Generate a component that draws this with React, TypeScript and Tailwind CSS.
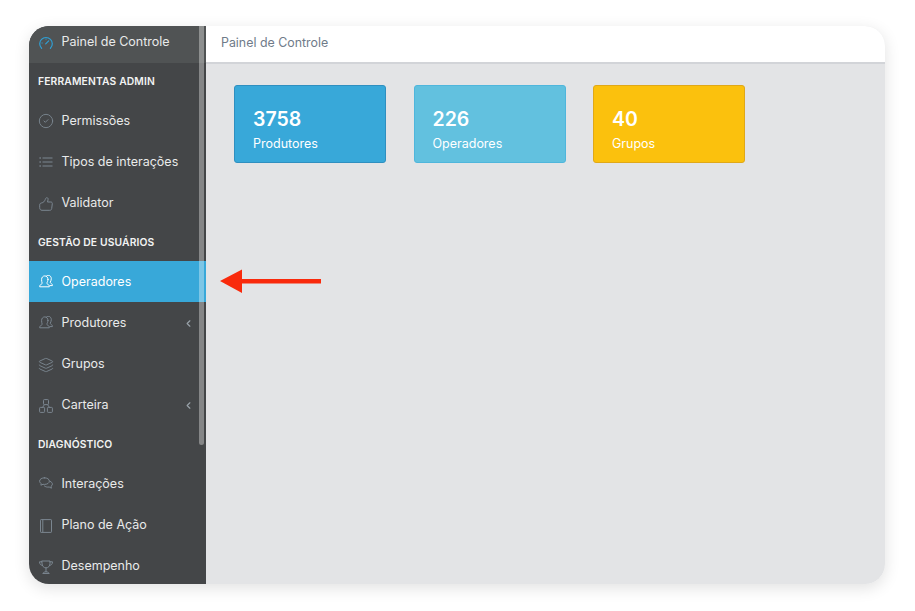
import React from 'react';
import { ChevronLeft, CircleCheck, Layers } from 'lucide-react';

type IconProps = { className?: string };

const GaugeIcon = ({ className }: IconProps) => (
  <svg viewBox="0 0 14 14" fill="none" stroke="currentColor" strokeWidth="1.200" strokeLinecap="round" className={className}>
    <path d="M2.600 12.300 A6.300 6.300 0 1 1 11.400 12.300" />
    <path d="M6.700 7.800 L9.700 4.800" />
    <path d="M7 2.900 V3.300 M2.900 7 H3.300" strokeWidth="0.900" />
  </svg>
);

const ThumbIcon = ({ className }: IconProps) => (
  <svg viewBox="0 0 14 14" fill="none" stroke="currentColor" strokeWidth="1" strokeLinejoin="round" strokeLinecap="round" className={className}>
    <path d="M0.700 7.800 C0.700 6.500 1.700 6 2.700 5.900 C4.300 5.700 5.600 4.300 6.200 2.600 C6.600 1.400 7 .7 7.900 .7 C8.900 .7 9.300 1.700 9 2.900 L8.500 5 H11.800 C12.900 5 13.400 5.800 13.300 6.700 L12.700 11.500 C12.600 12.600 11.900 13.300 10.800 13.300 H3 C1.500 13.300 .7 12.300 .7 11 Z" />
  </svg>
);

const UserIcon = ({ className }: IconProps) => (
  <svg viewBox="0 0 14 14" fill="none" stroke="currentColor" strokeWidth="1" strokeLinejoin="round" strokeLinecap="round" className={className}>
    <path d="M9 4.400 C9 6 8.200 7.100 7.900 7.900 C7.700 8.500 8.200 9 9 9.400 C9.800 9.800 10.300 10.400 10.300 11.800 H.7 C.7 10.400 1.200 9.800 2 9.400 C2.800 9 3.300 8.500 3.100 7.900 C2.800 7.100 2.600 6 2.600 4.400 C2.600 2.500 3.900 .9 5.800 .9 C7.700 .9 9 2.500 9 4.400 Z" />
    <path d="M7.500 .9 C7.900 .5 8.500 .3 9.200 .3 C11.100 .3 12.300 1.800 12.300 3.700 C12.300 5.200 11.600 6.400 11.300 7.100 C11.100 7.700 11.600 8.100 12.300 8.500 C13 8.900 13.400 9.400 13.400 10.600 H11" />
  </svg>
);

const BoxesIcon = ({ className }: IconProps) => (
  <svg viewBox="0 0 14 14" fill="none" stroke="currentColor" strokeWidth="1" strokeLinejoin="round" className={className}>
    <rect x="4.500" y=".6" width="5" height="5" rx=".8" />
    <rect x=".6" y="8.400" width="5" height="5" rx=".8" />
    <rect x="8.400" y="8.400" width="5" height="5" rx=".8" />
    <path d="M5.500 5.600 L3.500 8.400 M8.500 5.600 L10.500 8.400" />
  </svg>
);

const ChatIcon = ({ className }: IconProps) => (
  <svg viewBox="0 0 14 14" fill="none" stroke="currentColor" strokeWidth="1" strokeLinejoin="round" strokeLinecap="round" className={className}>
    <path d="M5.500 .8 C2.800 .8 .6 2.200 .6 4.100 C.6 5.100 1.200 6 2.200 6.500 L1.900 8.200 L4 7.300 C4.500 7.400 5 7.400 5.500 7.400 C8.200 7.400 10.400 6 10.400 4.100 C10.400 2.200 8.200 .8 5.500 .8 Z" />
    <path d="M11.300 4.400 C12.600 5 13.400 6 13.400 7.100 C13.400 8 12.900 8.800 12 9.300 L12.400 11.200 L10.200 10 C9.800 10.100 9.300 10.100 8.800 10.100 C7.400 10.100 6.200 9.700 5.400 9" />
  </svg>
);

const NotebookIcon = ({ className }: IconProps) => (
  <svg viewBox="0 0 14 14" fill="none" stroke="currentColor" strokeWidth="1" strokeLinejoin="round" className={className}>
    <rect x="1.500" y=".6" width="11" height="12.800" rx=".6" />
    <path d="M3.800 .6 V13.400" />
  </svg>
);

const TrophyIcon = ({ className }: IconProps) => (
  <svg viewBox="0 0 14 14" fill="none" stroke="currentColor" strokeWidth="1" strokeLinejoin="round" strokeLinecap="round" className={className}>
    <path d="M3 1 H11 V3.500 C11 6 9.300 7.900 7 7.900 C4.700 7.900 3 6 3 3.500 Z" />
    <path d="M3 1.800 H.5 C.5 4 1.700 5.300 3.500 5.500 M11 1.800 H13.500 C13.500 4 12.300 5.300 10.500 5.500" />
    <path d="M7 7.900 V11.800 M4 13.200 C4.500 12.300 5.500 11.800 7 11.800 C8.500 11.800 9.500 12.300 10 13.200 Z" />
  </svg>
);

const ListIcon = ({ className }: IconProps) => (
  <svg viewBox="0 0 14 14" fill="none" stroke="currentColor" strokeWidth="1" className={className}>
    <path d="M3.500 3 H13.500 M3.500 7 H13.500 M3.500 11 H13.500" />
    <path d="M.5 3 H1.800 M.5 7 H1.800 M.5 11 H1.800" strokeWidth="1.300" />
  </svg>
);

const CheckIcon = ({ className }: IconProps) => <CircleCheck className={className} strokeWidth={1.400} />;
const LayersIcon = ({ className }: IconProps) => <Layers className={className} strokeWidth={1.400} />;

type Item = {
  label: string;
  icon: React.ComponentType<IconProps>;
  chevron?: boolean;
  active?: boolean;
  wide?: boolean;
};

const SectionLabel = ({ children }: { children: React.ReactNode }) => (
  <div className="flex h-[37.400px] items-center pt-[1.500px] pl-[9px] text-[10.300px] font-semibold tracking-[0.15px] text-[#f2f3f3]">{children}</div>
);

const NavItem = ({ item }: { item: Item }) => {
  const Icon = item.icon;
  const tone = item.active ? 'text-white' : 'text-[#7b8690]';
  return (
    <div className={`flex h-[41.200px] items-center pt-[1.500px] pr-[12px] pl-[10px] ${item.active ? 'bg-[#38a8d9] text-white' : 'text-[#e9eaea]'}`}>
      <Icon className={item.wide ? `-mx-[1px] h-[16px] w-[16px] ${tone}` : `h-[14px] w-[14px] ${tone}`} />
      <span className="ml-[8.500px] flex-1 text-[12.500px]">{item.label}</span>
      {item.chevron && <ChevronLeft className="h-[11px] w-[11px] text-[#9aa3aa]" strokeWidth={2.500} />}
    </div>
  );
};

const StatCard = ({ value, label, color }: { value: string; label: string; color: string }) => (
  <div className={`flex h-[78px] w-[152px] flex-col rounded-[3px] border pt-[20px] pl-[18px] text-white ${color}`}>
    <div className="text-[19.500px] leading-[26px] font-semibold">{value}</div>
    <div className="mt-[2.500px] text-[12.500px] leading-[18px]">{label}</div>
  </div>
);

export default function App() {
  return (
    <div className="h-[611px] w-[915px] bg-white pt-[26px] pl-[29px] font-['Inter',sans-serif]">
      <div className="relative flex h-[558px] w-[856px] overflow-hidden rounded-[20px] shadow-[0_4px_16px_rgba(0,0,0,0.12)]">
        <aside className="w-[177px] shrink-0 overflow-hidden bg-[#444648]">
          <div className="flex h-[36.500px] items-center bg-[#505354] pb-[3px] pl-[10px] text-[#e9eaea]">
            <GaugeIcon className="h-[14px] w-[14px] text-[#2f9fd4]" />
            <span className="ml-[8.500px] text-[12.500px]">Painel de Controle</span>
          </div>
          <SectionLabel>FERRAMENTAS ADMIN</SectionLabel>
          <NavItem item={{ label: 'Permissões', icon: CheckIcon, wide: true }} />
          <NavItem item={{ label: 'Tipos de interações', icon: ListIcon }} />
          <NavItem item={{ label: 'Validator', icon: ThumbIcon }} />
          <SectionLabel>GESTÃO DE USUÁRIOS</SectionLabel>
          <NavItem item={{ label: 'Operadores', icon: UserIcon, active: true }} />
          <NavItem item={{ label: 'Produtores', icon: UserIcon, chevron: true }} />
          <NavItem item={{ label: 'Grupos', icon: LayersIcon, wide: true }} />
          <NavItem item={{ label: 'Carteira', icon: BoxesIcon, chevron: true }} />
          <SectionLabel>DIAGNÓSTICO</SectionLabel>
          <NavItem item={{ label: 'Interações', icon: ChatIcon }} />
          <NavItem item={{ label: 'Plano de Ação', icon: NotebookIcon }} />
          <NavItem item={{ label: 'Desempenho', icon: TrophyIcon }} />
        </aside>

        {/* scrollbar lies over the sidebar */}
        <div className="absolute top-0 left-[170px] h-[419px] w-[5px] rounded-b-full bg-white/35" />

        <main className="flex-1 bg-[#e3e4e6]">
          <div className="flex h-[37.500px] items-center border-b-2 border-[#d2d4d8] bg-white pb-[1px] pl-[15px] text-[12.400px] text-[#6f7b89]">
            Painel de Controle
          </div>
          <div className="flex gap-[27.500px] pt-[21.500px] pl-[28px]">
            <StatCard value="3758" label="Produtores" color="border-[#2f8fc0] bg-[#38a8d9]" />
            <StatCard value="226" label="Operadores" color="border-[#4fb6dc] bg-[#62c1df]" />
            <StatCard value="40" label="Grupos" color="border-[#e0a818] bg-[#fbc10d]" />
          </div>
        </main>

        {/* annotation arrow */}
        <svg viewBox="0 0 102 26" className="absolute top-[242px] left-[191px] h-[26px] w-[102px]">
          <path d="M0 13 L22 1.500 V11 H101 V15.500 H22 V25 Z" fill="#f92a0c" />
        </svg>
      </div>
    </div>
  );
}
